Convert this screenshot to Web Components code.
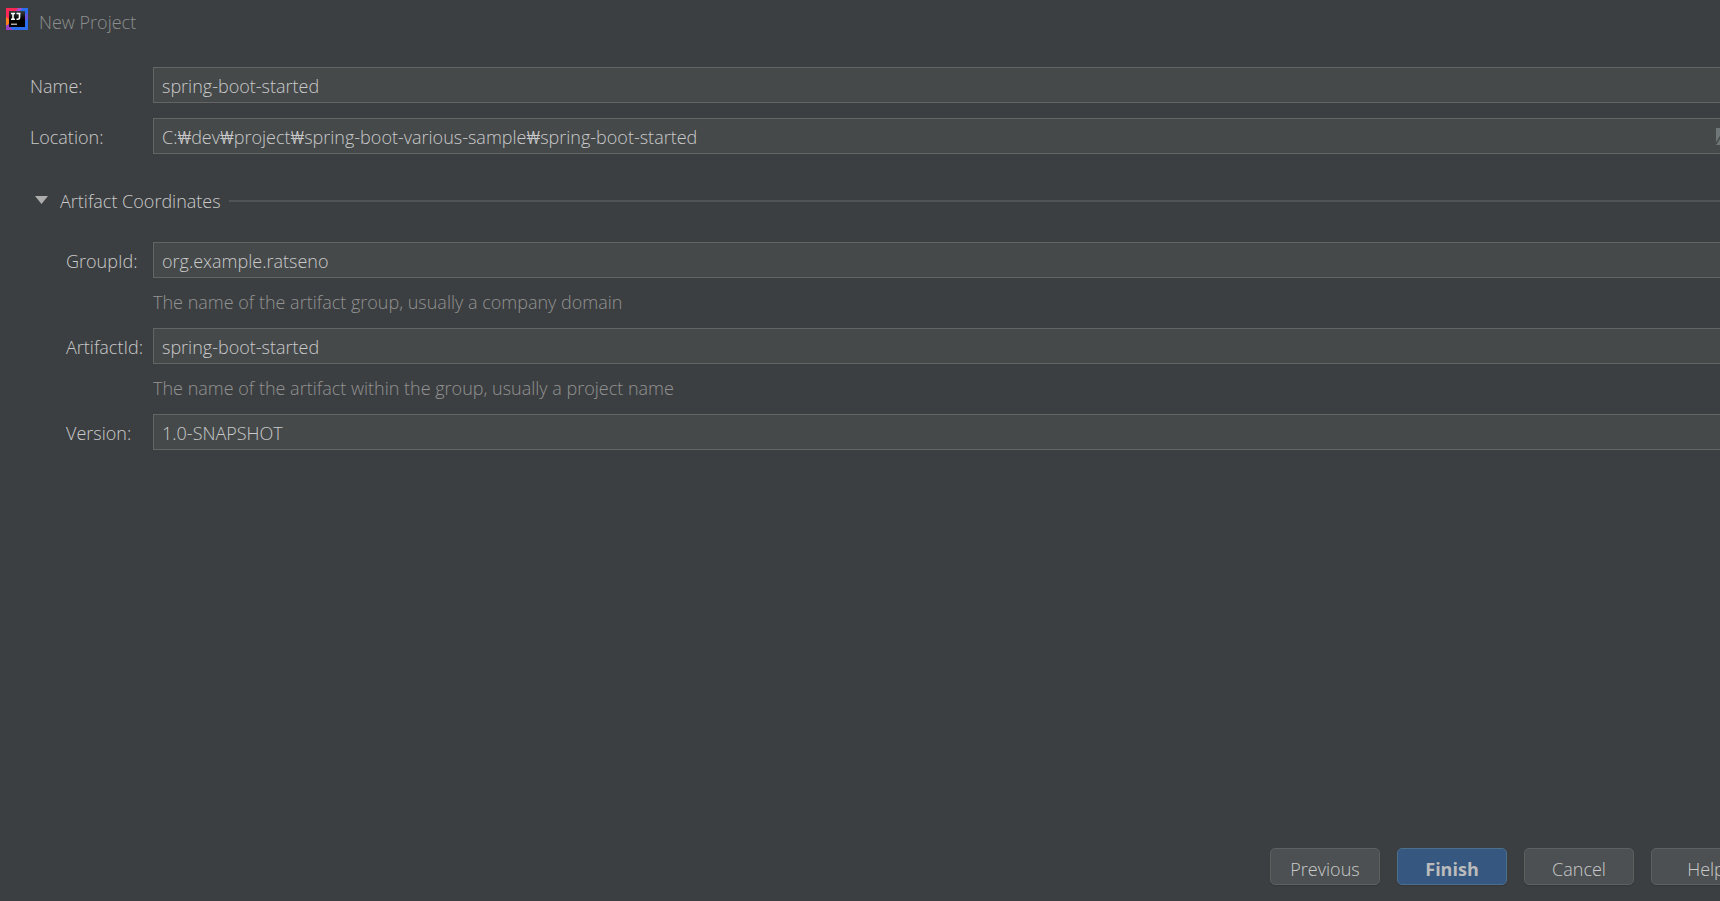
<!DOCTYPE html>
<html lang="en">
<head>
<meta charset="utf-8">
<title>New Project</title>
<style>
  html, body { height: 100%; }
  body {
    margin: 0; overflow: hidden; background: #3c3f41; color: #cacaca;
    font: 18px/24px "Open Sans", Roboto, "Noto Sans CJK KR", sans-serif;
  }
</style>
</head>
<body>
<new-project-dialog></new-project-dialog>
<script>
const define = (name, html, setup) => customElements.define(name, class extends HTMLElement {
  constructor() {
    super();
    const t = document.createElement('template');
    t.innerHTML = html;
    this.attachShadow({ mode: 'open' }).append(t.content.cloneNode(true));
    if (setup) setup(this, this.shadowRoot);
  }
});

define('idea-logo', `
<style>:host { display: block; width: 22px; height: 22px; } svg { display: block; }</style>
<svg width="22" height="22" viewBox="0 0 22 22" aria-hidden="true">
  <defs>
    <linearGradient id="k" x1="0" y1="0" x2="0" y2="1"><stop offset="0" stop-color="#3a3d3f"/><stop offset=".5" stop-color="#000"/></linearGradient>
  </defs>
  <path fill="#2b6ff0" d="M0 0h22v22H0z"/>
  <path fill="#fe2857" d="M0 0h13L8 11 0 12z"/>
  <path fill="#b24bc9" d="M12 0h4l-3 4H9z"/>
  <path fill="#fc801d" d="M0 9l4 3v4l-4 2z"/>
  <path fill="#9b3fc8" d="M0 18l4-3v4l3 3H0z"/>
  <path fill="#6a55e0" d="M19 7l3-2v6l-3 2z"/>
  <path fill="url(#k)" d="M3 3h16v16H3z"/>
  <path fill="none" stroke="#fff" stroke-width="1.600" d="M5 5.500h4M7 5.500v6M5 11.200h4M10.500 5.500h4M13.500 5.500v4q0 1.700-1.700 1.700h-1.300"/>
  <path fill="#aaa" d="M5 15.500h6v1.500H5z"/>
</svg>`);

define('title-bar', `
<style>
  :host { display: flex; align-items: center; gap: 11px; height: 44px; padding: 0 6px; box-sizing: border-box; color: #8c8f90; }
  idea-logo { margin-bottom: 6px; }
  h1 { margin: 0; font: inherit; }
</style>
<idea-logo></idea-logo><h1><slot></slot></h1>`);

define('form-field', `
<style>
  :host { display: grid; grid-template-columns: 123px minmax(0, 1fr); align-items: center; }
  :host([nested]) { grid-template-columns: 87px minmax(0, 1fr); }
  label { padding-top: 2px; }
  .box { display: flex; align-items: center; height: 36px; box-sizing: border-box; border: 1px solid #646464; background: #45494a; padding: 0 8px; }
  input { flex: 1; min-width: 0; border: 0; outline: 0; padding: 2px 0 0; margin: 0; height: 26px; box-sizing: border-box; background: none; color: inherit; font: inherit; }
  p { grid-column: 2; margin: 0; padding: 12px 0 13px; color: #929292; }
  p:empty { display: none; }
</style>
<label for="f"></label><div class="box"><input id="f" type="text" spellcheck="false"><slot></slot></div><p></p>`,
(host, root) => {
  root.querySelector('label').textContent = host.getAttribute('label');
  root.querySelector('input').value = host.getAttribute('value');
  root.querySelector('p').textContent = host.getAttribute('hint') || '';
});

define('browse-button', `
<style>
  :host { display: block; margin-right: 16px; padding-top: 2px; }
  button { display: block; border: 0; padding: 0; background: none; width: 20px; height: 18px; }
  svg { display: block; }
</style>
<button type="button" aria-label="Browse"><svg width="20" height="18" viewBox="0 0 20 18"><path fill="#6e7678" d="M0 0h8l2 3h10v14H0z"/><path fill="none" stroke="#45494a" stroke-width="1.500" d="M0 16L5 7.500h15"/></svg></button>`);

define('section-group', `
<style>
  :host { display: block; }
  button { display: flex; align-items: center; width: 100%; padding: 0; border: 0; background: none; color: inherit; font: inherit; text-align: left; }
  svg { margin: 0 12px 2px 5px; }
  i { flex: 1; height: 2px; margin-left: 8px; background: #515355; }
  .body { display: grid; gap: 1px; padding: 29px 0 0 36px; }
</style>
<button type="button" aria-expanded="true"><svg width="13" height="8" viewBox="0 0 13 8" aria-hidden="true"><path fill="#adadad" d="M0 0h13L6.500 8z"/></svg><span></span><i></i></button>
<div class="body"><slot></slot></div>`,
(host, root) => { root.querySelector('span').textContent = host.getAttribute('heading'); });

define('dialog-button', `
<style>
  :host { display: block; width: 110px; flex: none; }
  button { display: block; width: 100%; height: 37px; padding: 4px 0 0; box-sizing: border-box; border: 1px solid #5e6060; border-radius: 5px; background: #4c5052; color: inherit; font: inherit; box-shadow: 0 1px 1px #35383a; }
  :host([primary]) button { background: #365880; border-color: #4c708c; color: #bbbbbb; font-weight: 700; }
</style>
<button type="button"><slot></slot></button>`);

define('new-project-dialog', `
<style>
  :host { display: flex; flex-direction: column; height: 100%; margin-right: -41px; font-weight: 300; }
  main { flex: 1; padding: 23px 0 0 30px; }
  .top { display: grid; gap: 15px; margin-bottom: 35px; }
  footer { display: flex; justify-content: flex-end; gap: 17px; padding-bottom: 16px; }
</style>
<title-bar>New Project</title-bar>
<main>
  <div class="top">
    <form-field label="Name:" value="spring-boot-started"></form-field>
    <form-field label="Location:" value="C:₩dev₩project₩spring-boot-various-sample₩spring-boot-started"><browse-button></browse-button></form-field>
  </div>
  <section-group heading="Artifact Coordinates">
    <form-field nested label="GroupId:" value="org.example.ratseno" hint="The name of the artifact group, usually a company domain"></form-field>
    <form-field nested label="ArtifactId:" value="spring-boot-started" hint="The name of the artifact within the group, usually a project name"></form-field>
    <form-field nested label="Version:" value="1.0-SNAPSHOT"></form-field>
  </section-group>
</main>
<footer>
  <dialog-button>Previous</dialog-button><dialog-button primary>Finish</dialog-button><dialog-button>Cancel</dialog-button><dialog-button>Help</dialog-button>
</footer>`);
</script>
</body>
</html>
